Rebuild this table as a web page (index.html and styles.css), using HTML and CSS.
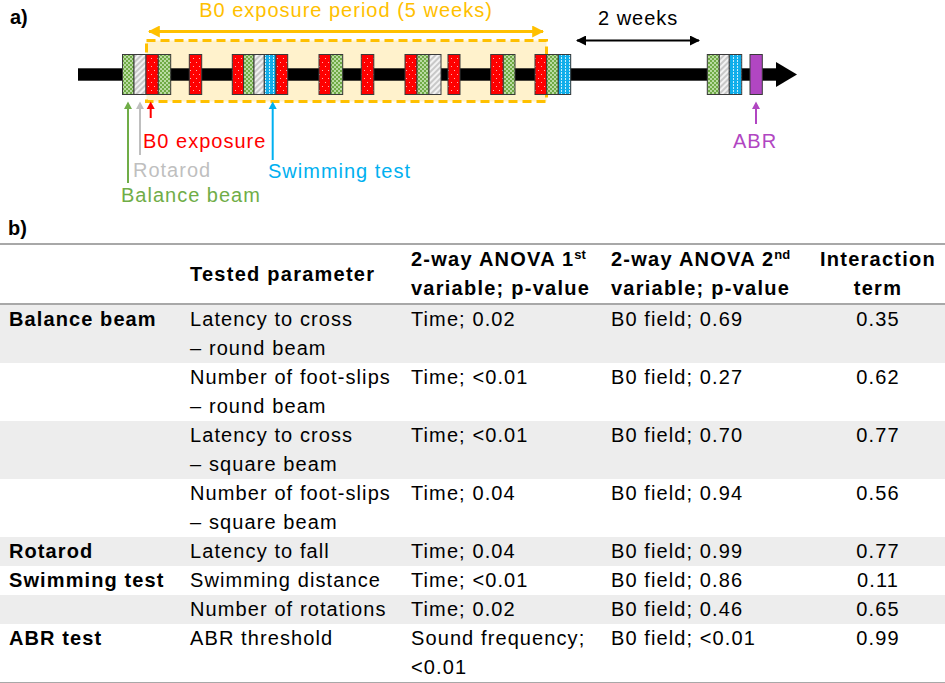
FILE: index.html
```html
<!DOCTYPE html>
<html>
<head>
<meta charset="utf-8">
<link rel="stylesheet" href="styles.css">
</head>
<body>
<div class="fig-a">
<svg width="945" height="214" viewBox="0 0 945 214">
  <defs>
    <pattern id="pGreen" width="4" height="4" patternUnits="userSpaceOnUse">
      <rect width="4" height="4" fill="#6FAA45"/>
      <rect x="0" y="0" width="2" height="2" fill="#B9DBA2"/>
      <rect x="2" y="2" width="2" height="2" fill="#B9DBA2"/>
    </pattern>
    <pattern id="pGray" width="4" height="4" patternUnits="userSpaceOnUse" patternTransform="rotate(45)">
      <rect width="4" height="4" fill="#C8C8C8"/>
      <rect width="2" height="4" fill="#F2F2F2"/>
    </pattern>
    <pattern id="pRed" width="6" height="8" patternUnits="userSpaceOnUse">
      <rect width="6" height="8" fill="#FF0000"/>
      <rect x="1" y="2" width="1" height="1" fill="#FFB0B0"/>
      <rect x="4" y="6" width="1" height="1" fill="#FFB0B0"/>
    </pattern>
    <pattern id="pBlue" width="4" height="3" patternUnits="userSpaceOnUse">
      <rect width="4" height="3" fill="#10AEEA"/>
      <rect x="1" y="0" width="1" height="2" fill="#C6EEFC"/>
    </pattern>
    <marker id="hOrange" viewBox="0 0 10 10" refX="9" refY="5" markerWidth="4" markerHeight="4" orient="auto-start-reverse">
      <path d="M0 0 L10 5 L0 10 Z" fill="#FFC000"/>
    </marker>
    <marker id="hBlack" viewBox="0 0 10 10" refX="9" refY="5" markerWidth="5" markerHeight="5" orient="auto-start-reverse">
      <path d="M0 0 L10 5 L0 10 Z" fill="#000"/>
    </marker>
  </defs>

  <text class="tag" x="10" y="24">a)</text>

  <text class="t-orange" x="346" y="17" text-anchor="middle">B0 exposure period (5 weeks)</text>
  <line x1="149" y1="31.5" x2="543" y2="31.5" stroke="#FFC000" stroke-width="3" marker-start="url(#hOrange)" marker-end="url(#hOrange)"/>

  <text class="t-black" x="598" y="25">2 weeks</text>
  <line x1="577" y1="40.5" x2="699" y2="40.5" stroke="#000" stroke-width="2" marker-start="url(#hBlack)" marker-end="url(#hBlack)"/>

  <rect x="146.5" y="40.5" width="400" height="61" fill="#FFF2CC" stroke="#FFC000" stroke-width="3" stroke-dasharray="9 5"/>

  <rect x="78" y="68.3" width="700" height="12.4" fill="#000"/>
  <polygon points="776,62 797,74.5 776,87" fill="#000"/>

  <g class="blocks" stroke="#3A3A3A" stroke-width="1">
    <rect x="122.5" y="54.5" width="11.5" height="40" fill="url(#pGreen)"/>
    <rect x="134" y="54.5" width="12" height="40" fill="url(#pGray)"/>
    <rect x="146" y="54.5" width="12.3" height="40" fill="url(#pRed)"/>
    <rect x="158.3" y="54.5" width="12.4" height="40" fill="url(#pGreen)"/>

    <rect x="189.3" y="54.5" width="12.4" height="40" fill="url(#pRed)"/>

    <rect x="232.3" y="54.5" width="11.2" height="40" fill="url(#pRed)"/>
    <rect x="243.5" y="54.5" width="10.5" height="40" fill="url(#pGreen)"/>
    <rect x="254" y="54.5" width="10.3" height="40" fill="url(#pGray)"/>
    <rect x="264.3" y="54.5" width="11.7" height="40" fill="url(#pBlue)"/>
    <rect x="276" y="54.5" width="11.7" height="40" fill="url(#pRed)"/>

    <rect x="319" y="54.5" width="11.7" height="40" fill="url(#pRed)"/>
    <rect x="330.7" y="54.5" width="12" height="40" fill="url(#pGreen)"/>

    <rect x="361.3" y="54.5" width="12.5" height="40" fill="url(#pRed)"/>

    <rect x="405" y="54.5" width="12" height="40" fill="url(#pRed)"/>
    <rect x="417" y="54.5" width="12" height="40" fill="url(#pGreen)"/>
    <rect x="429" y="54.5" width="12" height="40" fill="url(#pGray)"/>

    <rect x="448" y="54.5" width="12" height="40" fill="url(#pRed)"/>

    <rect x="490.7" y="54.5" width="12.6" height="40" fill="url(#pRed)"/>
    <rect x="503.3" y="54.5" width="11.7" height="40" fill="url(#pGreen)"/>

    <rect x="535" y="54.5" width="11.7" height="40" fill="url(#pRed)"/>
    <rect x="546.7" y="54.5" width="11.6" height="40" fill="url(#pGreen)"/>
    <rect x="558.3" y="54.5" width="12.4" height="40" fill="url(#pBlue)"/>

    <rect x="707.3" y="54.5" width="12" height="40" fill="url(#pGreen)"/>
    <rect x="719.3" y="54.5" width="10" height="40" fill="url(#pGray)"/>
    <rect x="729.3" y="54.5" width="12.4" height="40" fill="url(#pBlue)"/>

    <rect x="750" y="54.5" width="12.3" height="40" fill="#B146C2"/>
  </g>

  <g class="pointers">
    <line x1="128" y1="108" x2="128" y2="183" stroke="#70AD47" stroke-width="2"/>
    <polygon points="124,109 128,101.5 132,109" fill="#70AD47"/>
    <line x1="140" y1="108" x2="140" y2="155" stroke="#BFBFBF" stroke-width="2"/>
    <polygon points="136,109 140,101.5 144,109" fill="#BFBFBF"/>
    <line x1="150.7" y1="108" x2="150.7" y2="118" stroke="#FF0000" stroke-width="2"/>
    <polygon points="146.7,109 150.7,101.5 154.7,109" fill="#FF0000"/>
    <line x1="272.7" y1="108" x2="272.7" y2="160" stroke="#00B0F0" stroke-width="2"/>
    <polygon points="268.7,109 272.7,101.5 276.7,109" fill="#00B0F0"/>
    <line x1="756" y1="108" x2="756" y2="124" stroke="#B146C2" stroke-width="2"/>
    <polygon points="752,109 756,101.5 760,109" fill="#B146C2"/>
  </g>

  <text class="lbl lbl-red" x="143" y="148">B0 exposure</text>
  <text class="lbl lbl-gray" x="133" y="177">Rotarod</text>
  <text class="lbl lbl-blue" x="268" y="178">Swimming test</text>
  <text class="lbl lbl-green" x="121" y="202">Balance beam</text>
  <text class="lbl lbl-purple" x="733" y="148">ABR</text>
</svg>
</div>

<div class="tag-b">b)</div>

<table class="results">
  <colgroup>
    <col class="c1"><col class="c2"><col class="c3"><col class="c4"><col class="c5">
  </colgroup>
  <thead>
    <tr>
      <th></th>
      <th class="mid">Tested parameter</th>
      <th>2-way ANOVA 1<sup>st</sup><br>variable; p-value</th>
      <th>2-way ANOVA 2<sup>nd</sup><br>variable; p-value</th>
      <th class="center">Interaction<br>term</th>
    </tr>
  </thead>
  <tbody>
    <tr class="shade">
      <td class="grp">Balance beam</td>
      <td>Latency to cross<br>– round beam</td>
      <td>Time; 0.02</td>
      <td>B0 field; 0.69</td>
      <td class="center">0.35</td>
    </tr>
    <tr>
      <td class="grp"></td>
      <td>Number of foot-slips<br>– round beam</td>
      <td>Time; &lt;0.01</td>
      <td>B0 field; 0.27</td>
      <td class="center">0.62</td>
    </tr>
    <tr class="shade">
      <td class="grp"></td>
      <td>Latency to cross<br>– square beam</td>
      <td>Time; &lt;0.01</td>
      <td>B0 field; 0.70</td>
      <td class="center">0.77</td>
    </tr>
    <tr>
      <td class="grp"></td>
      <td>Number of foot-slips<br>– square beam</td>
      <td>Time; 0.04</td>
      <td>B0 field; 0.94</td>
      <td class="center">0.56</td>
    </tr>
    <tr class="shade">
      <td class="grp">Rotarod</td>
      <td>Latency to fall</td>
      <td>Time; 0.04</td>
      <td>B0 field; 0.99</td>
      <td class="center">0.77</td>
    </tr>
    <tr>
      <td class="grp">Swimming test</td>
      <td>Swimming distance</td>
      <td>Time; &lt;0.01</td>
      <td>B0 field; 0.86</td>
      <td class="center">0.11</td>
    </tr>
    <tr class="shade">
      <td class="grp"></td>
      <td>Number of rotations</td>
      <td>Time; 0.02</td>
      <td>B0 field; 0.46</td>
      <td class="center">0.65</td>
    </tr>
    <tr class="last">
      <td class="grp">ABR test</td>
      <td>ABR threshold</td>
      <td>Sound frequency;<br>&lt;0.01</td>
      <td>B0 field; &lt;0.01</td>
      <td class="center">0.99</td>
    </tr>
  </tbody>
</table>
</body>
</html>
```

FILE: styles.css
```css
html, body {
  margin: 0;
  padding: 0;
  background: #ffffff;
}

body {
  width: 945px;
  font-family: "Liberation Sans", Arial, sans-serif;
  color: #000;
}

.fig-a svg {
  display: block;
}

.tag {
  font-family: "Liberation Sans", Arial, sans-serif;
  font-weight: bold;
  font-size: 20px;
}

.t-orange,
.t-black,
.lbl {
  font-family: "Liberation Sans", Arial, sans-serif;
  font-size: 20px;
  letter-spacing: 1px;
}

.t-orange { fill: #FFC000; }
.t-black { fill: #000; }
.lbl-red { fill: #FF0000; }
.lbl-gray { fill: #BFBFBF; }
.lbl-blue { fill: #00B0F0; }
.lbl-green { fill: #70AD47; }
.lbl-purple { fill: #B146C2; }

.tag-b {
  font-weight: bold;
  font-size: 20px;
  line-height: 29px;
  padding-left: 8px;
}

.results {
  width: 945px;
  border-collapse: collapse;
  table-layout: fixed;
  font-size: 20px;
  line-height: 29px;
  letter-spacing: 1.1px;
  border-top: 2px solid #A8A8A8;
  border-bottom: 2px solid #A8A8A8;
}

.c1 { width: 182px; }
.c2 { width: 221px; }
.c3 { width: 200px; }
.c4 { width: 208px; }
.c5 { width: 134px; }

.results th,
.results td {
  padding: 0 0 0 8px;
  text-align: left;
  vertical-align: top;
  white-space: nowrap;
}

.results th {
  font-weight: bold;
  letter-spacing: 1.25px;
}

.results thead tr {
  border-bottom: 2px solid #A8A8A8;
}

.results th.mid {
  vertical-align: middle;
}

.results .center {
  text-align: center;
  padding-left: 0;
}

.results td.grp {
  font-weight: bold;
  padding-left: 9px;
}

.results sup {
  font-size: 13px;
  line-height: 0;
  letter-spacing: 0;
  vertical-align: 7px;
}

.shade {
  background: #EDEDED;
}
```
